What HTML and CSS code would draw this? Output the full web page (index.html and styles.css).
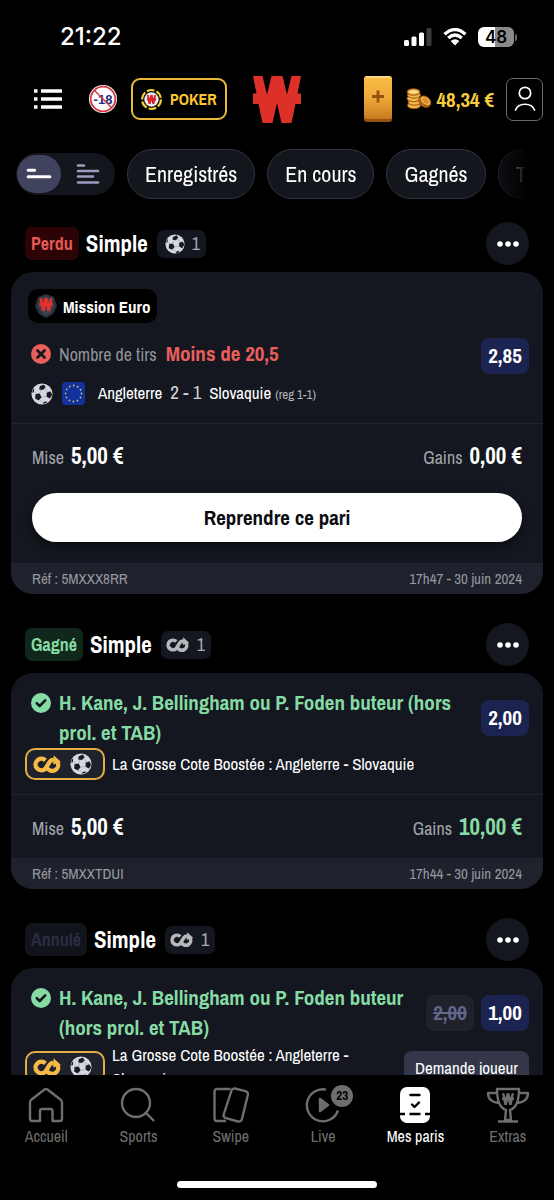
FILE: index.html
```html
<!DOCTYPE html>
<html lang="fr">
<head>
<meta charset="utf-8">
<meta name="viewport" content="width=device-width, initial-scale=1">
<title>Mes paris</title>
<link rel="stylesheet" href="styles.css">
</head>
<body>
<svg class="sprite" aria-hidden="true">
  <defs>
    <clipPath id="ball-clip"><circle cx="12" cy="12" r="11"/></clipPath>
    <symbol id="ball" viewBox="0 0 24 24">
      <circle cx="12" cy="12" r="11.500" fill="#d5d8dd"/>
      <g clip-path="url(#ball-clip)" fill="#191c24">
        <path d="M9.500 3.500 14 1.500 16 4.500 13 7.500 9 7z"/>
        <path d="M5 12 9.500 11.500 11.500 15.500 8.500 19 4.500 17z"/>
        <path d="M17 10.500 21 9 23.500 13 20.500 17 17 15z"/>
        <path d="M0 6 3.500 6.500 3 10 0 11z"/>
        <path d="M13.500 21 17 20 17 24 13 24z"/>
      </g>
      <path d="M11 7.500 9.500 11.500M15.500 6 18 10M11.500 15.500 17 14.500M4 9 5.500 12M9 18.500 13.500 21" stroke="#9ea1a8" stroke-width=".7" fill="none"/>
    </symbol>
    <symbol id="boost" viewBox="0 0 28 18">
      <path d="M12 5A5.600 5.600 0 1 0 12 13L16 6.500Q17.200 4.600 20 4.300" fill="none" stroke="currentColor" stroke-width="4.200"/>
      <path d="M13.500 12.200A5.700 5.700 0 1 0 23.500 6.500" fill="none" stroke="currentColor" stroke-width="4.200"/>
      <path d="M20 0 27 6.500 19.500 9z" fill="currentColor"/>
    </symbol>
    <symbol id="won" viewBox="0 0 20 20">
      <circle cx="10" cy="10" r="10" fill="#86dba5"/>
      <path d="M5.800 10.200 8.700 13 14.200 7.400" fill="none" stroke="#14171f" stroke-width="2.600" stroke-linecap="round" stroke-linejoin="round"/>
    </symbol>
    <symbol id="lost" viewBox="0 0 20 20">
      <circle cx="10" cy="10" r="10" fill="#ea5f5b"/>
      <path d="M6.500 6.500 13.500 13.500M13.500 6.500 6.500 13.500" stroke="#14171f" stroke-width="2.800" stroke-linecap="round"/>
    </symbol>
    <symbol id="dots" viewBox="0 0 22 6">
      <g fill="#fff"><circle cx="3" cy="3" r="2.800"/><circle cx="11" cy="3" r="2.800"/><circle cx="19" cy="3" r="2.800"/></g>
    </symbol>
    <symbol id="mark" viewBox="0 0 48 47">
      <path d="M0 0H9.500L14 18.500 18.500 0H29.500L34 18.500 38.500 0H48L44.500 17.500H48V28H42.500L38.500 47H28.500L24 27 19.500 47H9.500L5.500 28H0V17.500H3.500z" fill="currentColor"/>
    </symbol>
    <linearGradient id="gold" x1="0" y1="0" x2="0" y2="1">
      <stop offset="0" stop-color="#f9bf45"/><stop offset=".5" stop-color="#efa93a"/><stop offset="1" stop-color="#c97a20"/>
    </linearGradient>
  </defs>
</svg>

<div class="app">
  <div class="status">
    <time class="clock">21:22</time>
    <div class="signals">
      <svg class="cell" viewBox="0 0 28 18" aria-hidden="true"><rect x="0" y="12" width="5" height="6" rx="1.500" fill="#fff"/><rect x="7.500" y="8.500" width="5" height="9.500" rx="1.500" fill="#fff"/><rect x="15" y="4.500" width="5" height="13.500" rx="1.500" fill="#fff"/><rect x="22.500" y="0" width="5" height="18" rx="1.500" fill="#3a3a3c"/></svg>
      <svg class="wifi" viewBox="0 0 24 18" aria-hidden="true"><path d="M1.500 6.300Q12-3.200 22.500 6.300M5.200 10Q12 4 18.800 10" fill="none" stroke="#fff" stroke-width="3.200"/><path d="M12 17.500 7.600 13Q12 9.400 16.400 13z" fill="#fff"/></svg>
      <div class="power"><div class="battery">48</div><i class="nub"></i></div>
    </div>
  </div>

  <header class="top">
    <div class="top-left">
      <button class="plain menu" aria-label="Menu"><svg viewBox="0 0 28 20"><path d="M0 2H3.500M0 10H3.500M0 18H3.500M7 2H28M7 10H28M7 18H28" stroke="#fff" stroke-width="3.400"/></svg></button>
      <svg class="minor" viewBox="0 0 28 28" role="img" aria-label="Interdit aux mineurs"><circle cx="14" cy="14" r="14" fill="#fff"/><circle cx="14" cy="14" r="12.300" fill="#fff" stroke="#cf3a44" stroke-width="1.800"/><text x="14" y="18.500" text-anchor="middle" class="minor-text">-18</text><path d="M5.500 5.500 22.500 22.500" stroke="#cf3a44" stroke-width="1.400"/></svg>
      <button class="poker"><svg viewBox="0 0 20 20" aria-hidden="true"><circle cx="10" cy="10" r="9" fill="#111" stroke="#f3d02f" stroke-width="2" stroke-dasharray="7.400 2"/><circle cx="10" cy="10" r="6.800" fill="#eceaf0"/><use href="#mark" x="5.500" y="5.500" width="9" height="9" color="#d5252b"/></svg>POKER</button>
    </div>
    <svg class="brand" viewBox="0 0 48 47" role="img" aria-label="Winamax"><use href="#mark"/></svg>
    <div class="top-right">
      <button class="plain ticket" aria-label="Ajouter"><svg viewBox="0 0 28 46"><rect width="28" height="46" rx="3" fill="#98520f"/><rect width="28" height="43" rx="3" fill="url(#gold)"/><path d="M2.500 1H25.500" stroke="#fbe39e" stroke-width="1.600" stroke-linecap="round"/><path d="M8 20.500H20M14 14.500V26.500" stroke="#98520f" stroke-width="2.800"/></svg></button>
      <div class="balance">
        <svg viewBox="0 0 26 22" aria-hidden="true"><g fill="#f2b64a" stroke="#995514" stroke-width="1"><ellipse cx="8" cy="17.500" rx="6.500" ry="3.200"/><ellipse cx="8.500" cy="14" rx="6.500" ry="3.200"/><ellipse cx="7.500" cy="10.500" rx="6.500" ry="3.200"/><ellipse cx="8" cy="7" rx="6.500" ry="3.200"/><ellipse cx="7.500" cy="4" rx="6.500" ry="3.200"/><ellipse cx="18.500" cy="14" rx="6.400" ry="4.600" transform="rotate(38 18.500 14)" fill="#b96c1d"/><ellipse cx="19.500" cy="12.800" rx="6" ry="4" transform="rotate(38 19.500 12.800)"/></g><ellipse cx="7.500" cy="3.800" rx="4" ry="1.600" fill="#fbe08b"/><ellipse cx="19.500" cy="12.800" rx="3.600" ry="2" transform="rotate(38 19.500 12.800)" fill="#d58c2c"/></svg>
        <span>48,34 €</span>
      </div>
      <button class="profile" aria-label="Profil"><svg viewBox="0 0 22 26"><circle cx="11" cy="7" r="5.700" fill="none" stroke="#fff" stroke-width="1.700"/><path d="M1.500 24C4.500 16.300 17.500 16.300 20.500 24" fill="none" stroke="#fff" stroke-width="1.700" stroke-linecap="round"/></svg></button>
    </div>
  </header>

  <nav class="filters" aria-label="Filtres">
    <div class="toggle">
      <button class="on" aria-label="Vue compacte"><svg viewBox="0 0 24 18"><path d="M2 5.500H8M2 11.500H22" stroke="#fff" stroke-width="2.800" stroke-linecap="round"/></svg></button>
      <button aria-label="Vue détaillée"><svg viewBox="0 0 24 22"><path d="M2 2.500H8M2 8H22M2 13.500H17M2 19.500H22" stroke="#9a9cc0" stroke-width="2.600" stroke-linecap="round"/></svg></button>
    </div>
    <button class="filter">Enregistrés</button>
    <button class="filter">En cours</button>
    <button class="filter">Gagnés</button>
    <button class="filter">T</button>
  </nav>

  <main class="bets">
    <article class="bet">
      <header class="bet-head">
        <span class="state lost">Perdu</span>
        <h2>Simple</h2>
        <span class="count"><svg class="ball-small"><use href="#ball"/></svg>1</span>
        <button class="more" aria-label="Options"><svg><use href="#dots"/></svg></button>
      </header>
      <div class="card">
        <div class="body">
          <div class="mission"><svg viewBox="0 0 22 24" aria-hidden="true"><path d="M3 3 11 0 19 3 22 12 18 20 11 24 4 20 0 12z" fill="#2b323e"/><path d="M5 5 11 2 17 5 19 12 16 18 11 22 6 18 3 12z" fill="#3b4250"/><use href="#mark" x="4" y="4" width="14" height="13" color="#e2312d"/></svg>Mission Euro</div>
          <div class="pick single">
            <svg class="mark"><use href="#lost"/></svg>
            <p class="market">Nombre de tirs <strong>Moins de 20,5</strong></p>
            <span class="odds">2,85</span>
          </div>
          <div class="match">
            <svg class="ball-big"><use href="#ball"/></svg>
            <svg class="flag" viewBox="0 0 23 23" aria-hidden="true"><rect width="23" height="23" rx="4" fill="#14309a"/><circle cx="11.500" cy="11.500" r="8" fill="none" stroke="#c9c07a" stroke-width="1.800" stroke-linecap="round" stroke-dasharray="0.010 4.180"/></svg>
            <span class="teams">Angleterre <b>2 - 1</b> Slovaquie <small>(reg 1-1)</small></span>
          </div>
        </div>
        <div class="money">
          <dl><dt>Mise</dt><dd>5,00 €</dd></dl>
          <dl><dt>Gains</dt><dd>0,00 €</dd></dl>
        </div>
        <div class="action"><button class="again">Reprendre ce pari</button></div>
        <footer class="ref"><span>Réf : 5MXXX8RR</span><time>17h47 - 30 juin 2024</time></footer>
      </div>
    </article>

    <article class="bet">
      <header class="bet-head">
        <span class="state won">Gagné</span>
        <h2>Simple</h2>
        <span class="count"><svg class="boost-small"><use href="#boost"/></svg>1</span>
        <button class="more" aria-label="Options"><svg><use href="#dots"/></svg></button>
      </header>
      <div class="card">
        <div class="body">
          <div class="pick">
            <svg class="mark"><use href="#won"/></svg>
            <p class="title">H. Kane, J. Bellingham ou P. Foden buteur (hors prol. et TAB)</p>
            <span class="odds">2,00</span>
          </div>
          <div class="event">
            <span class="boosted"><svg class="boost-big"><use href="#boost"/></svg><svg class="ball-big"><use href="#ball"/></svg></span>
            <p>La Grosse Cote Boostée : Angleterre - Slovaquie</p>
          </div>
        </div>
        <div class="money">
          <dl><dt>Mise</dt><dd>5,00 €</dd></dl>
          <dl><dt>Gains</dt><dd class="gain">10,00 €</dd></dl>
        </div>
        <footer class="ref"><span>Réf : 5MXXTDUI</span><time>17h44 - 30 juin 2024</time></footer>
      </div>
    </article>

    <article class="bet">
      <header class="bet-head">
        <span class="state void">Annulé</span>
        <h2>Simple</h2>
        <span class="count"><svg class="boost-small"><use href="#boost"/></svg>1</span>
        <button class="more" aria-label="Options"><svg><use href="#dots"/></svg></button>
      </header>
      <div class="card">
        <div class="body">
          <div class="pick">
            <svg class="mark"><use href="#won"/></svg>
            <p class="title">H. Kane, J. Bellingham ou P. Foden buteur (hors prol. et TAB)</p>
            <s class="odds old">2,00</s>
            <span class="odds">1,00</span>
          </div>
          <div class="event">
            <span class="boosted"><svg class="boost-big"><use href="#boost"/></svg><svg class="ball-big"><use href="#ball"/></svg></span>
            <p>La Grosse Cote Boostée : Angleterre - Slovaquie</p>
            <button class="request">Demande joueur</button>
          </div>
        </div>
      </div>
    </article>
  </main>

  <nav class="tabs" aria-label="Navigation">
    <a href="#accueil"><svg viewBox="0 0 36 36"><path d="M2 15.500Q2 14 3 13L16.500 2.500Q18 1.500 19.500 2.500L33 13Q34 14 34 15.500V32Q34 34 32 34H24.500V24Q24.500 22 22.500 22H14Q12 22 12 24V34H4Q2 34 2 32z"/></svg>Accueil</a>
    <a href="#sports"><svg viewBox="0 0 36 36"><circle cx="16" cy="16" r="14"/><path d="M25 25 34 34"/></svg>Sports</a>
    <a href="#swipe"><svg viewBox="0 0 36 36"><path d="M13 34H4Q1.500 34 1.500 31V5Q1.500 2 4.500 2H17.500"/><path d="M18.500 3.500Q19.500 1 22 1.500L32.500 4.200Q35.500 5.200 34.800 8L29 32Q28 35.200 25 34.500L13 31.200Q10 30.300 10.700 27.500z"/></svg>Swipe</a>
    <a href="#live"><span class="live"><svg viewBox="0 0 36 36"><path d="M21 2.600A16 16 0 1 0 33 23.500"/><path d="M15 12 23 18 15 24z" class="solid"/></svg><span class="badge">23</span></span>Live</a>
    <a href="#paris" class="current" aria-current="page"><svg viewBox="0 0 36 36"><rect x="3" y="0" width="30" height="36" rx="7" fill="#fff" stroke="none"/><path d="M13.500 8H22.500M15 17.500 17.500 20 22 15.500" stroke="#000" stroke-linecap="round"/><path d="M3 27H8M12.500 27H23.500M28 27H33" stroke="#000"/></svg>Mes paris</a>
    <a href="#extras"><svg class="cup" viewBox="0 0 44 36"><path d="M11 2H33Q33 20 24 23L25 33H19L20 23Q11 20 11 2zM11 6H2Q2 15 13 16M33 6H42Q42 15 31 16M12 34.500H32"/><use href="#mark" x="16" y="6" width="12" height="12" stroke="none" color="#6e6e6e"/></svg>Extras</a>
  </nav>
  <div class="home-bar"></div>
</div>
</body>
</html>
```
FILE: styles.css
```css
* { box-sizing: border-box; }

body {
  margin: 0;
  background: #000;
  color: #fff;
  font-family: "Liberation Sans Narrow", "Archivo Narrow", "Roboto", sans-serif;
  font-size: 16px;
}

button {
  font: inherit;
  color: inherit;
  border: 0;
  padding: 0;
  background: none;
  white-space: nowrap;
}

h2, p, dl, dd { margin: 0; }
svg { display: block; flex: none; }
.sprite { position: absolute; width: 0; height: 0; }

.app {
  display: flex;
  flex-direction: column;
  height: 100vh;
}

/* Status bar */
.status {
  flex: none;
  display: flex;
  justify-content: space-between;
  align-items: center;
  height: 74px;
  padding: 0 37px 0 60px;
}
.clock { font: 500 24px/28px Inter, sans-serif; }
.signals { display: flex; align-items: center; gap: 11px; }
.cell { width: 28px; height: 18px; }
.wifi { width: 24px; height: 18px; }
.power { display: flex; align-items: center; gap: 1px; }
.battery {
  width: 36px;
  border-radius: 6px;
  background: linear-gradient(90deg, #fff 48%, #8a8a8a 48%);
  color: #000;
  font: 600 17px/20px Inter, sans-serif;
  text-align: center;
}
.nub { width: 2px; height: 7px; border-radius: 0 2px 2px 0; background: #6a6a6a; }

/* Header */
.top {
  flex: none;
  display: grid;
  grid-template-columns: 1fr auto 1fr;
  align-items: center;
  height: 50px;
  padding: 0 11px;
}
.top-left { display: flex; align-items: center; padding-left: 23px; }
.menu svg { width: 28px; height: 20px; }
.minor { width: 28px; height: 28px; margin: 0 14px 0 27px; }
.minor-text { font: bold 13px "Liberation Sans", sans-serif; fill: #1d2c78; }
.poker {
  display: flex;
  align-items: center;
  gap: 8px;
  height: 42px;
  padding: 0 8px;
  border: 2px solid #e9b93c;
  border-radius: 9px;
  color: #fbc531;
  font-weight: bold;
  font-size: 16px;
}
.poker svg { width: 21px; height: 21px; }
.brand { width: 48px; height: 47px; color: #dc3029; }
.top-right { display: flex; align-items: center; justify-content: flex-end; gap: 12px; }
.ticket { margin-right: 2px; }
.ticket svg { width: 28px; height: 46px; }
.balance {
  display: flex;
  align-items: center;
  gap: 5px;
  color: #f9cd3d;
  font-weight: bold;
  font-size: 21px;
  white-space: nowrap;
}
.balance svg { width: 26px; height: 22px; }
.profile {
  display: grid;
  place-items: center;
  width: 37px;
  height: 43px;
  border: 1px solid #6c6c70;
  border-radius: 7px;
}
.profile svg { width: 22px; height: 26px; }

/* Filters */
.filters {
  flex: none;
  display: flex;
  align-items: center;
  gap: 12px;
  margin: 25px 28px 0 16px;
  overflow: hidden;
  -webkit-mask-image: linear-gradient(90deg, #000 calc(100% - 44px), #0003 calc(100% - 6px), transparent);
  mask-image: linear-gradient(90deg, #000 calc(100% - 44px), #0003 calc(100% - 6px), transparent);
}
.toggle {
  flex: none;
  display: flex;
  gap: 5px;
  padding: 2px 5px 2px 1px;
  border-radius: 21px;
  background: #14161e;
}
.toggle button { display: grid; place-items: center; width: 44px; height: 38px; border-radius: 19px; }
.toggle .on { background: #40435d; }
.toggle svg { width: 26px; height: 22px; }
.filter {
  flex: none;
  height: 50px;
  padding: 0 17px;
  border: 1px solid #33343e;
  border-radius: 25px;
  background: #14161e;
  font-size: 22px;
}

/* Bets */
.bets { flex: 1; min-height: 0; overflow: hidden; padding: 23px 11px 0; }
.bet { margin-bottom: 29px; }
.bet-head { display: flex; align-items: center; padding: 0 14px 7px; }
.bet-head h2 { margin: 0 9px 0 7px; font-size: 23px; line-height: 30px; }
.state { padding: 0 6px; border-radius: 7px; font-weight: bold; font-size: 18px; line-height: 33px; }
.state.lost { background: #2c0406; color: #e55a57; }
.state.won { background: #10281b; color: #86dba5; }
.state.void { background: #12141c; color: #2b2e42; }
.count {
  display: flex;
  align-items: center;
  gap: 7px;
  padding: 0 6px 0 5px;
  border-radius: 7px;
  background: #14171f;
  color: #a9abb1;
  font-size: 18px;
  line-height: 28px;
}
.ball-small { width: 20px; height: 20px; margin-left: 3px; }
.boost-small { width: 24px; height: 16px; color: #b6b8bc; }
.more {
  display: grid;
  place-items: center;
  width: 43px;
  height: 43px;
  margin-left: auto;
  border-radius: 50%;
  background: #14171f;
}
.more svg { width: 22px; height: 6px; }

.card { overflow: hidden; border-radius: 22px; background: #14171f; }
.body { padding: 15px 14px 14px; border-bottom: 1px solid #23252e; }
.mission {
  display: flex;
  align-items: center;
  gap: 6px;
  width: fit-content;
  height: 34px;
  margin: 2px 0 15px 3px;
  padding: 0 6px 0 7px;
  border-radius: 10px;
  background: #000;
  font-weight: bold;
  font-size: 17px;
}
.mission svg { width: 22px; height: 24px; }
.pick { display: flex; align-items: flex-start; gap: 7px; padding-left: 6px; min-height: 60px; }
.pick.single { align-items: center; min-height: 36px; }
.mark { width: 20px; height: 20px; margin: 5px 1px 0 0; }
.single .mark { margin: 0 1px 4px 0; }
.market { flex: 1; padding-bottom: 3px; color: #909298; font-size: 18px; line-height: 30px; }
.market strong { margin-left: 5px; color: #ea5f5b; font-size: 21px; }
.title { flex: 1; color: #86dba5; font-weight: bold; font-size: 21px; line-height: 30px; }
.odds {
  flex: none;
  align-self: center;
  width: 48px;
  border-radius: 8px;
  background: #1b2350;
  font-weight: bold;
  font-size: 21px;
  line-height: 36px;
  text-align: center;
}
.odds.old { background: #1f212b; color: #62668a; }
.match { display: flex; align-items: center; gap: 9px; padding: 6px 0 2px 6px; }
.ball-big { width: 22px; height: 22px; }
.flag { width: 23px; height: 23px; }
.teams { padding-left: 4px; font-size: 17px; line-height: 24px; }
.teams b { margin: 0 4px; color: #d2d3d6; font-size: 19px; font-weight: normal; }
.teams small { color: #b2b4b9; font-size: 13px; }
.event { display: flex; align-items: center; gap: 7px; }
.event p { flex: 1; font-size: 17px; line-height: 24px; }
.boosted {
  flex: none;
  display: flex;
  align-items: center;
  gap: 8px;
  height: 32px;
  padding: 0 11px 0 6px;
  border: 2px solid #e5ac42;
  border-radius: 10px;
  background: #1f212d;
}
.boost-big { width: 29px; height: 19px; color: #f6bb45; }
.request { height: 32px; padding: 0 11px; border-radius: 8px; background: #34374a; font-size: 17px; }

.money { display: flex; justify-content: space-between; padding: 17px 21px 14px; }
.money dl { display: flex; align-items: baseline; gap: 7px; line-height: 30px; }
.money dt { color: #a2a4a9; font-size: 18px; }
.money dd { font-weight: bold; font-size: 23px; }
.money .gain { color: #86dba5; }
.action { padding: 6px 21px 21px; }
.again {
  width: 100%;
  height: 49px;
  border-radius: 25px;
  background: #fff;
  box-shadow: 0 4px 10px #0008;
  color: #0b0c10;
  font-weight: bold;
  font-size: 21px;
}
.ref {
  display: flex;
  justify-content: space-between;
  padding: 0 21px;
  background: #1f212c;
  color: #96989f;
  font-size: 15px;
  line-height: 31px;
}

/* Bottom navigation */
.tabs { flex: none; display: grid; grid-template-columns: repeat(6, 1fr); padding-top: 12px; background: #000; }
.tabs a {
  display: flex;
  flex-direction: column;
  align-items: center;
  gap: 3px;
  color: #6e6e6e;
  font-size: 16px;
  line-height: 20px;
  text-decoration: none;
}
.tabs svg { width: 36px; height: 36px; fill: none; stroke: #6e6e6e; stroke-width: 2.4; stroke-linejoin: round; }
.tabs .cup { width: 44px; }
.tabs .solid { fill: #6e6e6e; }
.tabs .current { color: #fff; }
.live { position: relative; }
.badge {
  position: absolute;
  top: -2px;
  right: -12px;
  width: 22px;
  border-radius: 50%;
  background: #6e6e6e;
  color: #000;
  font-weight: bold;
  font-size: 13px;
  line-height: 22px;
  text-align: center;
}
.home-bar { flex: none; align-self: center; width: 36%; height: 7px; margin: 35px 0 12px; border-radius: 4px; background: #fff; }
```
